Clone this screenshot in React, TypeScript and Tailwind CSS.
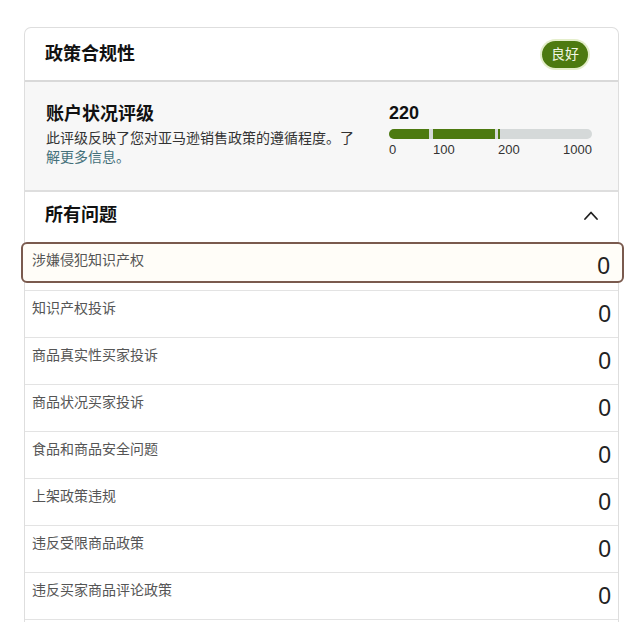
import React from 'react';

const font = { fontFamily: '"Liberation Sans", "Noto Sans CJK SC", sans-serif' };

const issues = [
  '涉嫌侵犯知识产权',
  '知识产权投诉',
  '商品真实性买家投诉',
  '商品状况买家投诉',
  '食品和商品安全问题',
  '上架政策违规',
  '违反受限商品政策',
  '违反买家商品评论政策',
];

function ChevronUp() {
  return (
    <svg width="18" height="12" viewBox="0 0 18 12" fill="none">
      <path d="M3 10 L9 3.5 L15 10" stroke="#1f1f1f" strokeWidth="1.8" strokeLinecap="round" strokeLinejoin="round" />
    </svg>
  );
}

function ScoreBar() {
  return (
    <div className="w-[203px]">
      <div className="text-[18px] leading-[22px] font-bold text-[#111]">220</div>
      <div className="relative mt-[5px] h-[10px] rounded-full bg-[#d5d9d9] overflow-hidden">
        <div className="absolute left-0 top-0 h-full w-[40px] bg-[#4d7a10]" />
        <div className="absolute left-[44px] top-0 h-full w-[62px] bg-[#4d7a10]" />
        <div className="absolute left-[109px] top-0 h-full w-[2px] bg-[#4d7a10]" />
      </div>
      <div className="relative mt-[2px] h-[17px] text-[13px] leading-[17px] text-[#333]">
        <span className="absolute left-0">0</span>
        <span className="absolute left-[44px]">100</span>
        <span className="absolute left-[109px]">200</span>
        <span className="absolute right-0">1000</span>
      </div>
    </div>
  );
}

export default function App() {
  return (
    <div className="min-h-[622px] bg-white" style={font}>
      <div className="pt-[27px] pl-[24px]">
        <div className="w-[595px] rounded-t-[7px] border border-b-0 border-[#dedede]">
          <div className="h-[52px] flex items-center justify-between pl-[20px] pr-[30px]">
            <div className="text-[18px] font-bold text-[#111]">政策合规性</div>
            <div className="h-[27px] px-[9px] flex items-center rounded-full bg-[#4d7a10] ring-2 ring-[#e4eecb] text-[14px] text-[#f1f6e4]">
              良好
            </div>
          </div>
          <div className="h-[2px] bg-[#d9d9d9]" />
          <div className="h-[108px] bg-[#f7f7f7] flex pl-[21px] pr-[26px] pt-[20px]">
            <div className="flex-1">
              <div className="text-[18px] leading-[24px] font-bold text-[#111]">账户状况评级</div>
              <div className="mt-[3px] w-[320px] text-[14px] leading-[19px] text-[#333]">
                此评级反映了您对亚马逊销售政策的遵循程度。了<span className="text-[#44707a]">解更多信息。</span>
              </div>
            </div>
            <ScoreBar />
          </div>
          <div className="h-[2px] bg-[#dedede]" />
          <div className="h-[50px] pb-[4px] flex items-center justify-between pl-[20px] pr-[18px]">
            <div className="text-[18px] font-semibold text-[#111]">所有问题</div>
            <ChevronUp />
          </div>
          {issues.map((label, i) =>
            i === 0 ? (
              <div key={label} className="h-[48px]">
                <div className="-ml-[4px] -mr-[6px] h-[41px] rounded-[6px] border-2 border-[#7a5a4e] bg-[#fffdf8] flex justify-between pl-[9px] pr-[12px]">
                  <div className="pt-[6px] text-[14px] leading-[20px] text-[#555]">{label}</div>
                  <div className="pt-[9px] text-[23px] leading-[26px] text-[#222]">0</div>
                </div>
              </div>
            ) : (
              <div key={label} className="h-[47px] border-t border-[#e3e3e3] flex justify-between pl-[7px] pr-[7px]">
                <div className="pt-[7px] text-[14px] leading-[20px] text-[#555]">{label}</div>
                <div className="pt-[10px] text-[23px] leading-[26px] text-[#222]">0</div>
              </div>
            )
          )}
          <div className="h-[10px] border-t border-[#e3e3e3]" />
        </div>
      </div>
    </div>
  );
}
